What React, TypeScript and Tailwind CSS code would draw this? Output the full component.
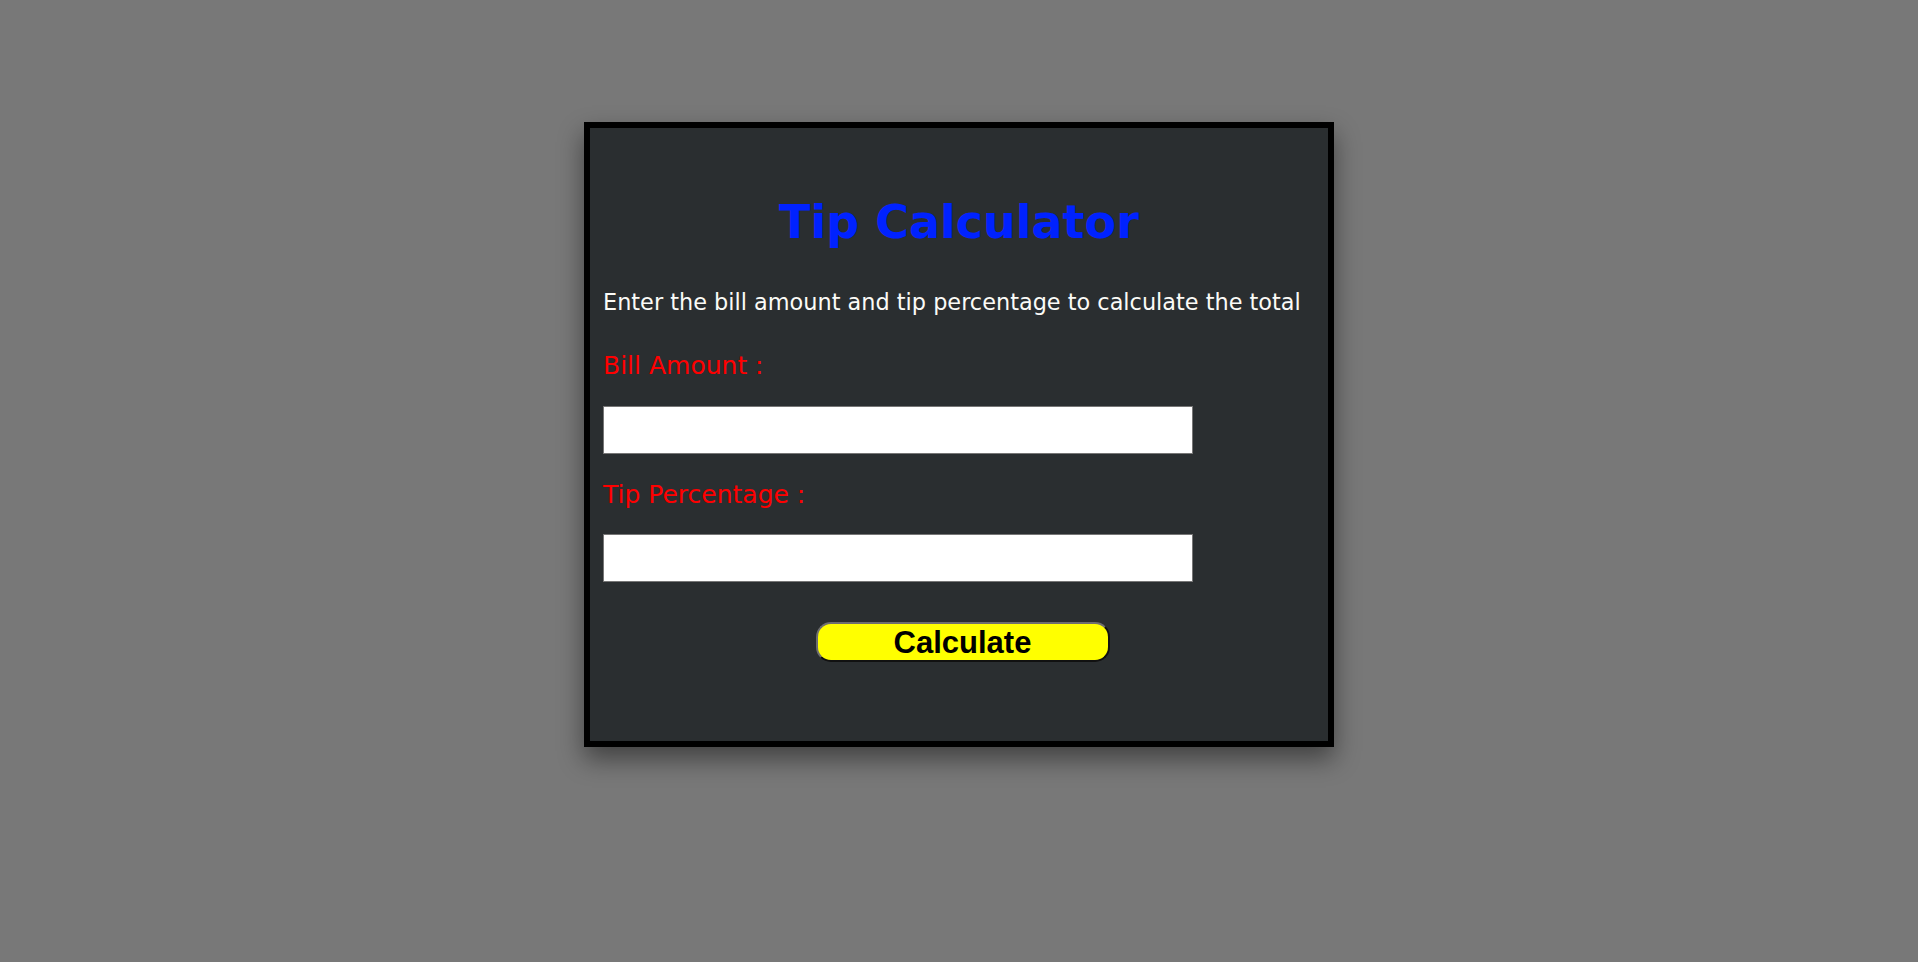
export default function App() {
  return (
    <div className="h-screen w-full overflow-hidden bg-[#787878] pt-[122px]">
      <div className="mx-auto flex w-[750px] h-[625px] flex-col border-[6px] border-black bg-[#2a2e30] px-[13px] shadow-[0_12px_24px_rgba(0,0,0,0.45)] font-['DejaVu_Sans',sans-serif]">
        <h1 className="mt-[66px] text-center text-[46px] font-bold leading-[56px] text-[#0022ff]">
          Tip Calculator
        </h1>
        <p className="mt-[38px] text-[22.4px] leading-[28px] text-[#fbfbf7] whitespace-nowrap">
          Enter the bill amount and tip percentage to calculate the total
        </p>
        <label className="mt-[35px] text-[25px] leading-[30px] text-[#ff0000]">
          Bill Amount :
        </label>
        <input
          type="text"
          className="mt-[25px] h-[48px] w-[590px] border border-[#767676] bg-white outline-none"
        />
        <label className="mt-[26px] text-[25px] leading-[30px] text-[#ff0000]">
          Tip Percentage :
        </label>
        <input
          type="text"
          className="mt-[24px] h-[48px] w-[590px] border border-[#767676] bg-white outline-none"
        />
        <div className="mt-[40px] flex justify-center pl-[7px]">
          <button className="h-[40px] w-[294px] rounded-[15px] border-2 border-t-[#6e6e6e] border-l-[#6e6e6e] border-r-[#111] border-b-[#111] bg-[#ffff00] font-['Liberation_Sans',Arial,sans-serif] text-[31px] font-bold leading-none text-black">
            Calculate
          </button>
        </div>
      </div>
    </div>
  );
}
